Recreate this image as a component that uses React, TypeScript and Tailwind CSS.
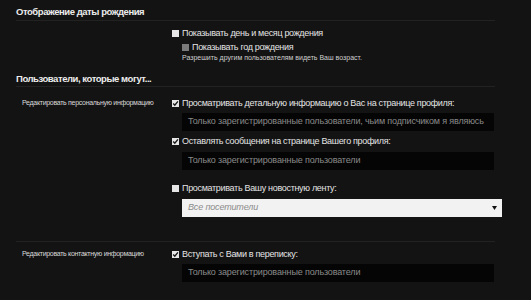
import React from "react";

function Box({ state }: { state: "checked" | "empty" | "disabled" }) {
  if (state === "disabled") {
    return <span className="block w-[7px] h-[7px] bg-[#7a7a7a] shrink-0" />;
  }
  return (
    <span className="relative block w-[7px] h-[7px] bg-[#e6e6e6] shrink-0">
      {state === "checked" && (
        <svg className="absolute left-0 top-0" width="7" height="7" viewBox="0 0 7 7">
          <path d="M1.2 3.6 L2.8 5.2 L5.9 1.4" stroke="#1a1a1a" strokeWidth="1.4" fill="none" />
        </svg>
      )}
    </span>
  );
}

function CheckRow({ state, text }: { state: "checked" | "empty" | "disabled"; text: string }) {
  return (
    <div className="flex items-center gap-[3px] h-[12px]">
      <Box state={state} />
      <span className="text-[9px] tracking-[-0.32px] leading-[12px] text-[#e4e4e4] whitespace-nowrap">{text}</span>
    </div>
  );
}

function Field({ text }: { text: string }) {
  return (
    <div className="ml-[10px] w-[312px] h-[18px] bg-[#050505] flex items-center pl-[6px] text-[9px] tracking-[-0.15px] text-[#8a8a8a] whitespace-nowrap overflow-hidden">
      {text}
    </div>
  );
}

export default function App() {
  return (
    <div
      className="w-[531px] h-[300px] overflow-hidden bg-[#131313] text-[#e0e0e0]"
      style={{ fontFamily: '"Liberation Sans", Arial, sans-serif' }}
    >
      <div className="ml-4">
        <div className="w-[479px] pt-[5px] pb-[1px] border-b border-[#222] text-[9.5px] tracking-[-0.45px] leading-[14px] font-bold text-[#ececec]">
          Отображение даты рождения
        </div>
        <div className="pl-[156px] mt-[6px]">
          <CheckRow state="empty" text="Показывать день и месяц рождения" />
          <div className="pl-[10px] mt-[2px]">
            <CheckRow state="disabled" text="Показывать год рождения" />
            <div className="text-[7px] leading-[10px] text-[#cfcfcf] whitespace-nowrap">
              Разрешить другим пользователям видеть Ваш возраст.
            </div>
          </div>
        </div>
        <div className="w-[479px] mt-[9px] border-b border-[#222] text-[9.5px] tracking-[-0.45px] leading-[14px] font-bold text-[#ececec]">
          Пользователи, которые могут...
        </div>

        <div className="flex mt-[10px]">
          <div className="w-[156px] shrink-0 pl-[6px] text-[7px] tracking-[-0.3px] leading-[12px] text-[#d8d8d8] whitespace-nowrap">
            Редактировать персональную информацию
          </div>
          <div className="flex flex-col shrink-0">
            <CheckRow state="checked" text="Просматривать детальную информацию о Вас на странице профиля:" />
            <div className="mt-[4px]">
              <Field text="Только зарегистрированные пользователи, чьим подписчиком я являюсь" />
            </div>
            <div className="mt-[4px]">
              <CheckRow state="checked" text="Оставлять сообщения на странице Вашего профиля:" />
            </div>
            <div className="mt-[5px]">
              <Field text="Только зарегистрированные пользователи" />
            </div>
            <div className="mt-[12px]">
              <CheckRow state="empty" text="Просматривать Вашу новостную ленту:" />
            </div>
            <div className="mt-[5px] ml-[10px] w-[320px] h-[18px] bg-[#f2f2f2] flex items-center justify-between pl-[6px] pr-[5px]">
              <span className="text-[9px] tracking-[-0.15px] italic text-[#8c8c8c]">Все посетители</span>
              <svg width="5" height="4" viewBox="0 0 5 4">
                <path d="M0 0 L5 0 L2.5 4 Z" fill="#111" />
              </svg>
            </div>
          </div>
        </div>

        <div className="w-[479px] mt-[24px] border-t border-[#222]" />

        <div className="flex mt-[6px]">
          <div className="w-[156px] shrink-0 pl-[6px] text-[7px] tracking-[-0.3px] leading-[12px] text-[#d8d8d8] whitespace-nowrap">
            Редактировать контактную информацию
          </div>
          <div className="flex flex-col shrink-0">
            <CheckRow state="checked" text="Вступать с Вами в переписку:" />
            <div className="mt-[4px]">
              <Field text="Только зарегистрированные пользователи" />
            </div>
          </div>
        </div>
      </div>
    </div>
  );
}
